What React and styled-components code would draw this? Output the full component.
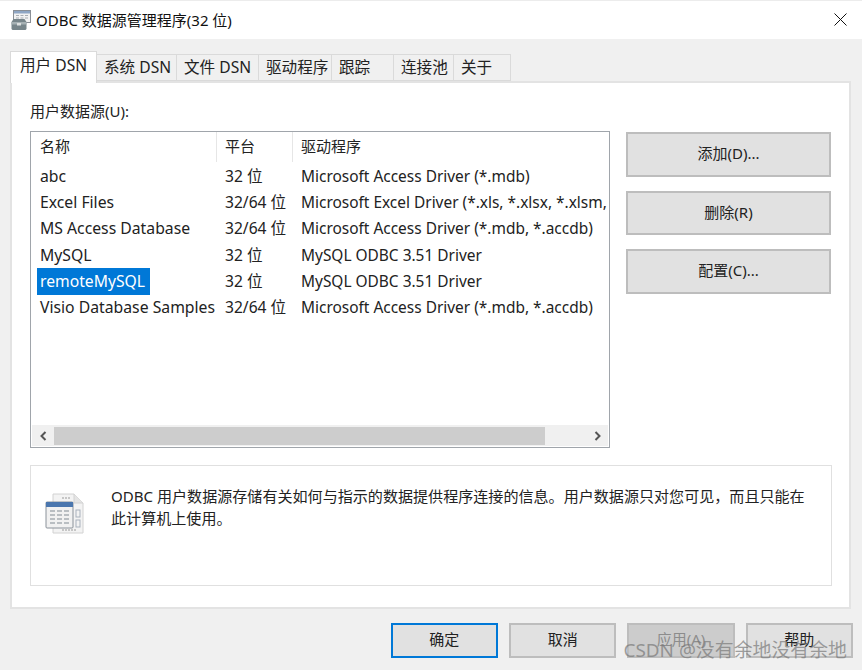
import React from "react";
import styled, { createGlobalStyle } from "styled-components";

const GlobalStyle = createGlobalStyle`
  html, body {
    margin: 0;
    padding: 0;
    background: #f0f0f0;
  }
  * {
    box-sizing: border-box;
  }
`;

const FONT = `"Noto Sans", "Noto Sans CJK SC", sans-serif`;

const Window = styled.div`
  position: relative;
  width: 862px;
  height: 670px;
  overflow: hidden;
  display: flex;
  flex-direction: column;
  font-family: ${FONT};
  font-size: 15px;
  color: #222;
  background: #f0f0f0;
`;

const TitleBar = styled.div`
  height: 39px;
  flex: none;
  display: flex;
  align-items: center;
  padding: 0 15px 1px 11px;
  gap: 5px;
  background: #fff;
  border-top: 1px solid #ececec;
`;

const Title = styled.div`
  flex: 1;
  font-size: 15px;
  color: #111;
  white-space: nowrap;
`;

const Body = styled.div`
  flex: 1;
  display: flex;
  flex-direction: column;
  padding: 12px 10px 0;
`;

const TabRow = styled.div`
  height: 30px;
  flex: none;
  display: flex;
  align-items: flex-end;
  position: relative;
  z-index: 1;
`;

const Tab = styled.div`
  width: ${(p) => p.$w}px;
  height: ${(p) => (p.$active ? 32 : 27)}px;
  margin-bottom: ${(p) => (p.$active ? -2 : 0)}px;
  padding: ${(p) => (p.$active ? "0 0 6px 9px" : "0 0 3px 7px")};
  font-size: 15.6px;
  display: flex;
  align-items: center;
  background: ${(p) => (p.$active ? "#fff" : "#f0f0f0")};
  border: 1px solid #dadada;
  border-bottom: ${(p) => (p.$active ? "none" : "1px solid #dadada")};
  border-left: ${(p) => (p.$first || p.$active ? "1px solid #dadada" : "none")};
  white-space: nowrap;
`;

const Panel = styled.div`
  width: 841px;
  height: 528px;
  flex: none;
  background: #fff;
  border: 2px solid #e3e3e3;
  padding: 18px 18px 0;
`;

const SectionLabel = styled.div`
  height: 20px;
  line-height: 20px;
  margin-bottom: 10px;
`;

const Columns = styled.div`
  display: flex;
  align-items: flex-start;
  gap: 16px;
`;

const ListBox = styled.div`
  width: 580px;
  height: 317px;
  flex: none;
  display: flex;
  flex-direction: column;
  border: 1px solid #a0a5ab;
  background: #fff;
`;

const ListRows = styled.div`
  flex: 1;
  overflow: hidden;
  padding-left: 1px;
`;

const Row = styled.div`
  display: grid;
  grid-template-columns: 184px 76px 1fr;
  height: ${(p) => (p.$header ? 31 : 26.2)}px;
  line-height: 26px;
  white-space: nowrap;
`;

const HeaderCell = styled.div`
  padding-left: 8px;
  height: 30px;
  line-height: 28px;
  border-left: ${(p) => (p.$first ? "none" : "1px solid #e6e6e6")};
`;

const Cell = styled.div`
  padding-left: ${(p) => (p.$first ? 8 : 9)}px;
  font-size: ${(p) => p.$size || 15.6}px;
  overflow: hidden;
`;

const SelectedCell = styled.div`
  padding-left: 5px;
  font-size: 15.7px;
`;

const Selected = styled.span`
  display: block;
  width: 113px;
  height: 27px;
  padding-left: 3px;
  background: #0078d7;
  color: #fff;
`;

const ScrollBar = styled.div`
  height: 21px;
  flex: none;
  display: flex;
  align-items: center;
  margin: 0 1px 1px;
  background: #f0f0f0;
`;

const ScrollBtn = styled.div`
  width: 22px;
  height: 19px;
  flex: none;
  display: flex;
  align-items: center;
  justify-content: center;
`;

const ScrollThumb = styled.div`
  width: 491px;
  height: 18px;
  flex: none;
  background: #cdcdcd;
`;

const ScrollSpace = styled.div`
  flex: 1;
`;

const SideButtons = styled.div`
  width: 205px;
  flex: none;
  padding-top: 1px;
  display: flex;
  flex-direction: column;
  gap: 14px;
`;

const Button = styled.div`
  width: ${(p) => p.$w || 205}px;
  height: ${(p) => p.$h || 44.6}px;
  padding-bottom: 3px;
  display: flex;
  align-items: center;
  justify-content: center;
  background: ${(p) => (p.$disabled ? "#cccccc" : "#e1e1e1")};
  border: ${(p) => (p.$primary ? "2px solid #0078d7" : "2px solid #bdbdbd")};
  color: ${(p) => (p.$disabled ? "#8c8c8c" : "#222")};
  white-space: nowrap;
`;

const InfoBox = styled.div`
  width: 802px;
  height: 121px;
  margin-top: 17px;
  display: flex;
  align-items: flex-start;
  border: 1px solid #e0e0e0;
  padding: 19px 20px 0 14px;
`;

const InfoIcon = styled.div`
  width: 40px;
  flex: none;
  padding-top: 8px;
  margin-right: 26px;
`;

const InfoText = styled.div`
  font-size: 15.07px;
  line-height: 22px;
  width: 700px;
`;

const Footer = styled.div`
  display: flex;
  justify-content: flex-end;
  gap: 10.8px;
  padding: 14px 0 0;
  margin-right: -1px;
`;

const Watermark = styled.div`
  position: absolute;
  right: 15px;
  bottom: 7px;
  font-size: 18.9px;
  color: rgba(120, 120, 120, 0.7);
  white-space: nowrap;
`;

const CloseIcon = () => (
  <svg width="13" height="13" viewBox="0 0 13 13">
    <path d="M0.5 0.5L12.5 12.5M12.5 0.5L0.5 12.5" stroke="#111" strokeWidth="1" fill="none" />
  </svg>
);

const AppIcon = () => (
  <svg width="20" height="20" viewBox="0 0 20 20">
    <rect x="2.5" y="0.5" width="17" height="12" fill="#f2f2f2" stroke="#8a8f96" />
    <rect x="3" y="1" width="16" height="2.5" fill="#8fa6c4" />
    <path d="M5 5.5h3M9.5 5.5h3M14 5.5h3M5 8h3M9.5 8h3M14 8h3" stroke="#a8adb3" strokeWidth="1" />
    <path d="M0.5 12l2-3h11l2 3v7l-1 1H1.5l-1-1z" fill="#77858a" />
    <path d="M0.5 12h15v2.5H0.5z" fill="#a6b1b4" />
    <rect x="6" y="13" width="4" height="2.5" fill="#dcdfdf" />
  </svg>
);

const TableDocIcon = () => (
  <svg width="40" height="42" viewBox="0 0 40 42">
    <path d="M8 1h21l9 9v30H8z" fill="#f3f3f3" stroke="#d2d2d2" />
    <path d="M29 1v9h9" fill="#e4e4e4" stroke="#d2d2d2" />
    <path d="M17 5h8M17 37h14" stroke="#c6c6c6" strokeWidth="2" strokeDasharray="2 1" />
    <rect x="31" y="17" width="4" height="7" fill="none" stroke="#a9b2bd" />
    <rect x="31" y="27" width="4" height="7" fill="none" stroke="#a9b2bd" />
    <rect x="1" y="9" width="27" height="26" rx="1" fill="#f1f1f1" stroke="#8b929a" />
    <rect x="1" y="9" width="27" height="5" fill="#4a76ae" />
    <path
      d="M5 18h5M12 18h5M19 18h5M5 22h5M12 22h5M19 22h5M5 26h5M12 26h5M19 26h5M5 30h5M12 30h5M19 30h5"
      stroke="#a7adb3"
      strokeWidth="1.5"
    />
  </svg>
);

const ArrowLeft = () => (
  <svg width="9" height="10" viewBox="0 0 9 10">
    <path d="M6.5 1L2.5 5l4 4" stroke="#555" strokeWidth="2" fill="none" />
  </svg>
);

const ArrowRight = () => (
  <svg width="9" height="10" viewBox="0 0 9 10">
    <path d="M2.5 1l4 4-4 4" stroke="#555" strokeWidth="2" fill="none" />
  </svg>
);

const tabs = [
  { label: "用户 DSN", w: 87, active: true },
  { label: "系统 DSN", w: 80 },
  { label: "文件 DSN", w: 82 },
  { label: "驱动程序", w: 73 },
  { label: "跟踪", w: 62 },
  { label: "连接池", w: 60 },
  { label: "关于", w: 57 },
];

const rows = [
  ["abc", "32 位", "Microsoft Access Driver (*.mdb)"],
  ["Excel Files", "32/64 位", "Microsoft Excel Driver (*.xls, *.xlsx, *.xlsm, *.xlsb)"],
  ["MS Access Database", "32/64 位", "Microsoft Access Driver (*.mdb, *.accdb)"],
  ["MySQL", "32 位", "MySQL ODBC 3.51 Driver"],
  ["remoteMySQL", "32 位", "MySQL ODBC 3.51 Driver", true],
  ["Visio Database Samples", "32/64 位", "Microsoft Access Driver (*.mdb, *.accdb)"],
];

const App = () => {
  return (
    <Window>
      <GlobalStyle />
      <TitleBar>
        <AppIcon />
        <Title>ODBC 数据源管理程序(32 位)</Title>
        <CloseIcon />
      </TitleBar>

      <Body>
        <TabRow>
          {tabs.map((t, i) => (
            <Tab key={t.label} $w={t.w} $active={t.active} $first={i === 0}>
              {t.label}
            </Tab>
          ))}
        </TabRow>

        <Panel>
          <SectionLabel>用户数据源(U):</SectionLabel>
          <Columns>
            <ListBox>
              <ListRows>
                <Row $header>
                  <HeaderCell $first>名称</HeaderCell>
                  <HeaderCell>平台</HeaderCell>
                  <HeaderCell>驱动程序</HeaderCell>
                </Row>
                {rows.map(([name, platform, driver, selected]) => (
                  <Row key={name}>
                    {selected ? (
                      <SelectedCell>
                        <Selected>{name}</Selected>
                      </SelectedCell>
                    ) : (
                      <Cell $first $size={15.75}>{name}</Cell>
                    )}
                    <Cell>{platform}</Cell>
                    <Cell $size={15.45}>{driver}</Cell>
                  </Row>
                ))}
              </ListRows>
              <ScrollBar>
                <ScrollBtn>
                  <ArrowLeft />
                </ScrollBtn>
                <ScrollThumb />
                <ScrollSpace />
                <ScrollBtn>
                  <ArrowRight />
                </ScrollBtn>
              </ScrollBar>
            </ListBox>

            <SideButtons>
              <Button>添加(D)...</Button>
              <Button>删除(R)</Button>
              <Button>配置(C)...</Button>
            </SideButtons>
          </Columns>

          <InfoBox>
            <InfoIcon>
              <TableDocIcon />
            </InfoIcon>
            <InfoText>
              ODBC 用户数据源存储有关如何与指示的数据提供程序连接的信息。用户数据源只对您可见，而且只能在此计算机上使用。
            </InfoText>
          </InfoBox>
        </Panel>

        <Footer>
          <Button $w={107.5} $h={34.5} $primary>确定</Button>
          <Button $w={107.5} $h={34.5}>取消</Button>
          <Button $w={107.5} $h={34.5} $disabled>应用(A)</Button>
          <Button $w={107.5} $h={34.5}>帮助</Button>
        </Footer>
      </Body>

      <Watermark>CSDN @没有余地没有余地</Watermark>
    </Window>
  );
};

export default App;
